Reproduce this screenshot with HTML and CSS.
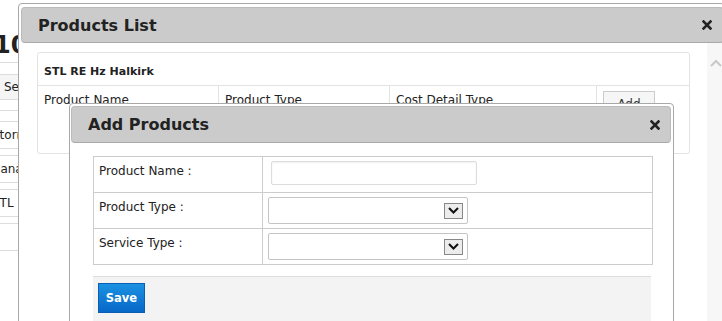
FILE: index.html
```html
<!DOCTYPE HTML>
<html>
<head>
<title>Products</title>
<link rel="stylesheet" href="styles.css">
</head>
<body>
<div class="page">
    <h1 class="page-title">10</h1>
    <div class="toolbar"><span class="tool-btn">Search</span></div>
    <div class="page-rows">
        <div class="page-row">Stormont</div>
        <div class="page-row">Canada</div>
        <div class="page-row">STL RE</div>
        <div class="page-row"></div>
    </div>
</div>

<div class="dialog dialog-list">
    <div class="dialog-head">
        <h2>Products List</h2>
        <svg class="close" width="10" height="10" viewBox="0 0 10 10"><path d="M1.5 1.5 L8.5 8.5 M8.5 1.5 L1.5 8.5" stroke="#222" stroke-width="2.6" stroke-linecap="square"/></svg>
    </div>
    <div class="dialog-body">
        <div class="dialog-content">
            <div class="panel">
                <div class="panel-title">STL RE Hz Halkirk</div>
                <table class="list-table">
                    <tr>
                        <td class="col-name">Product Name</td>
                        <td class="col-type">Product Type</td>
                        <td class="col-cost">Cost Detail Type</td>
                        <td class="col-add"><button class="add-btn">Add</button></td>
                    </tr>
                </table>
            </div>
        </div>
        <div class="scrollbar">
            <svg width="12" height="8" viewBox="0 0 12 8"><path d="M1 7 L6 2 L11 7" fill="none" stroke="#c8c8c8" stroke-width="2"/></svg>
        </div>
    </div>
</div>

<div class="dialog dialog-add">
    <div class="dialog-head">
        <h2>Add Products</h2>
        <svg class="close" width="10" height="10" viewBox="0 0 10 10"><path d="M1.5 1.5 L8.5 8.5 M8.5 1.5 L1.5 8.5" stroke="#222" stroke-width="2.6" stroke-linecap="square"/></svg>
    </div>
    <div class="add-body">
        <table class="form-table">
            <tr>
                <td class="label">Product Name :</td>
                <td><input type="text" class="text-input"></td>
            </tr>
            <tr>
                <td class="label">Product Type :</td>
                <td><div class="select-box"><span class="select-arrow"><svg width="11" height="7" viewBox="0 0 11 7"><path d="M1 1 L5.5 5.5 L10 1" fill="none" stroke="#111" stroke-width="2"/></svg></span></div></td>
            </tr>
            <tr>
                <td class="label">Service Type :</td>
                <td><div class="select-box"><span class="select-arrow"><svg width="11" height="7" viewBox="0 0 11 7"><path d="M1 1 L5.5 5.5 L10 1" fill="none" stroke="#111" stroke-width="2"/></svg></span></div></td>
            </tr>
        </table>
        <div class="form-footer">
            <button class="save-btn">Save</button>
        </div>
    </div>
</div>
</body>
</html>
```

FILE: styles.css
```css
body {
    margin: 0;
    font-family: "DejaVu Sans", Verdana, sans-serif;
    font-size: 12px;
    color: #222;
    background: #fff;
    overflow: hidden;
}

/* page behind the dialogs */

.page {
    margin-left: -8px;
    width: 200px;
}

.page-title {
    margin: 0 0 0 2px;
    padding-top: 32px;
    font-size: 24px;
    line-height: 26px;
    font-weight: bold;
}

.toolbar {
    margin-top: 4px;
    border-top: 1px solid #ddd;
    padding: 11px 0 10px 0;
    border-bottom: 1px solid #ddd;
}

.tool-btn {
    display: inline-block;
    margin-left: 0;
    padding: 5px 8px 5px 11px;
    border: 1px solid #ddd;
    background: #f5f5f5;
}

.page-rows {
    margin-top: 10px;
}

.page-row {
    height: 26px;
    line-height: 26px;
    border-top: 1px solid #ddd;
    border-bottom: 1px solid #ddd;
    margin-bottom: 6px;
}

/* dialogs */

.dialog {
    position: absolute;
    background: #fff;
    border: 1px solid #a8a8a8;
    border-radius: 4px;
}

.dialog-list {
    left: 18px;
    top: 3px;
    width: 703px;
    height: 340px;
    padding: 3px 0 0 2px;
}

.dialog-head {
    display: flex;
    align-items: center;
    justify-content: space-between;
    background: #cbcbcb;
    border: 1px solid #bbb;
    border-bottom-color: #a9a9a9;
    border-radius: 4px;
    box-sizing: border-box;
}

.dialog-head h2 {
    margin: 0;
    font-size: 16px;
    font-weight: bold;
    color: #222;
}

.dialog-list .dialog-head {
    height: 36px;
    padding: 0 11px 0 16px;
}

.dialog-body {
    display: flex;
    height: 300px;
}

.dialog-content {
    flex: 1;
    padding: 9px 17px 0 16px;
}

.scrollbar {
    width: 17px;
    background: #f7f7f7;
    text-align: center;
    padding-top: 13px;
}

.panel {
    border: 1px solid #e3e3e3;
    border-radius: 3px;
    height: 100px;
}

.panel-title {
    font-size: 11px;
    font-weight: bold;
    padding: 12px 6px 0 6px;
    height: 20px;
    border-bottom: 1px solid #e3e3e3;
}

.list-table {
    border-collapse: collapse;
    width: 100%;
}

.list-table td {
    vertical-align: top;
    padding: 7px 6px;
    height: 40px;
    border-left: 1px solid #e3e3e3;
}

.list-table td:first-child {
    border-left: none;
}

.col-name { width: 168px; }
.col-type { width: 158px; }
.col-cost { width: 194px; }

.add-btn {
    font-family: "DejaVu Sans", Verdana, sans-serif;
    font-size: 12px;
    width: 52px;
    height: 26px;
    margin-top: -2px;
    border: 1px solid #ccc;
    background: #f6f6f6;
    color: #333;
}

.dialog-add {
    left: 69px;
    top: 103px;
    width: 600px;
    height: 240px;
    padding: 2px 2px 0 1px;
}

.dialog-add .dialog-head {
    height: 37px;
    padding: 0 10px 0 16px;
}

.add-body {
    padding: 13px 19px 0 22px;
}

.form-table {
    width: 560px;
    border-collapse: collapse;
    border: 1px solid #ccc;
}

.form-table td {
    border: 1px solid #ccc;
    height: 36px;
    padding: 0;
    box-sizing: border-box;
}

.form-table td.label {
    width: 169px;
    vertical-align: top;
    padding: 7px 5px 0 5px;
}

.text-input {
    display: block;
    width: 206px;
    height: 24px;
    box-sizing: border-box;
    margin: 0 0 4px 8px;
    border: 1px solid #ddd;
    border-radius: 2px;
    box-shadow: inset 0 1px 2px #f0f0f0;
}

.select-box {
    display: flex;
    justify-content: flex-end;
    align-items: center;
    width: 200px;
    height: 27px;
    box-sizing: border-box;
    margin-left: 5px;
    padding-right: 4px;
    border: 1px solid #c4c4c4;
    border-radius: 2px;
}

.select-arrow {
    display: flex;
    align-items: center;
    justify-content: center;
    width: 19px;
    height: 16px;
    box-sizing: border-box;
    border: 1px solid #888;
    background: #ececec;
}

.form-footer {
    margin-top: 11px;
    width: 558px;
    height: 60px;
    border-top: 1px solid #dedede;
    background: #f3f3f3;
    padding: 6px 5px;
    box-sizing: border-box;
}

.save-btn {
    font-family: "DejaVu Sans", Verdana, sans-serif;
    font-size: 11.5px;
    font-weight: bold;
    color: #fff;
    width: 47px;
    height: 30px;
    border: 1px solid #0a5fb4;
    background: linear-gradient(#1b91e2, #0767c8);
    padding: 0;
}
```
